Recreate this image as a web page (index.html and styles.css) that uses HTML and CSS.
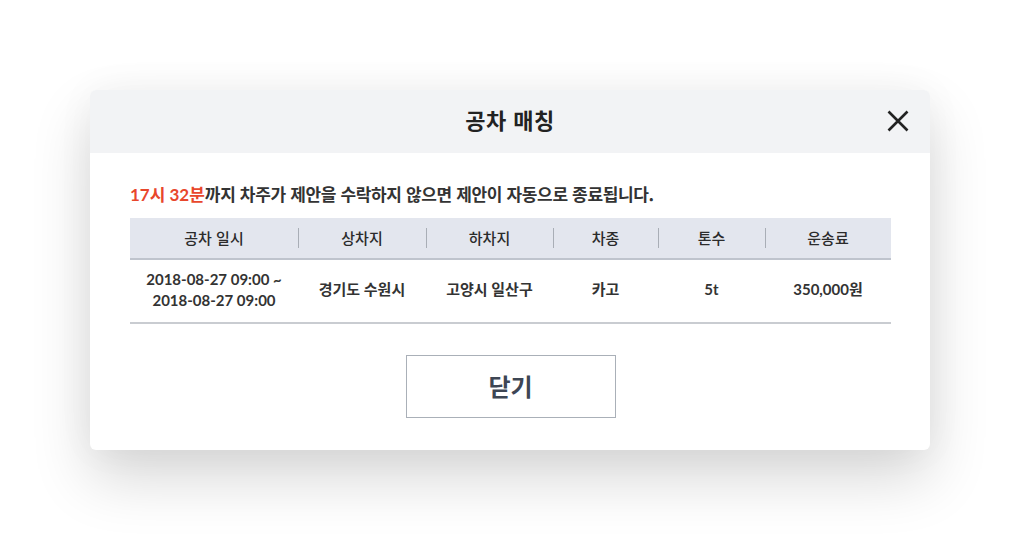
FILE: index.html
```html
<!DOCTYPE html>
<html lang="ko">
<head>
<meta charset="utf-8">
<link rel="stylesheet" href="styles.css">
</head>
<body>
<div class="modal">
  <div class="modal-head">
    <h1 class="modal-title">공차 매칭</h1>
    <button class="close-btn" aria-label="닫기">
      <svg width="22" height="22" viewBox="0 0 22 22"><path d="M1.5 1.5 L20.5 20.5 M20.5 1.5 L1.5 20.5" stroke="#222" stroke-width="2.6" fill="none"/></svg>
    </button>
  </div>
  <div class="modal-body">
    <p class="notice"><span class="accent">17시 32분</span>까지 차주가 제안을 수락하지 않으면 제안이 자동으로 종료됩니다.</p>
    <table class="info">
      <colgroup>
        <col class="c1"><col class="c2"><col class="c3"><col class="c4"><col class="c5"><col class="c6">
      </colgroup>
      <thead>
        <tr>
          <th>공차 일시</th><th>상차지</th><th>하차지</th><th>차종</th><th>톤수</th><th>운송료</th>
        </tr>
      </thead>
      <tbody>
        <tr>
          <td>2018-08-27 09:00 ~<br>2018-08-27 09:00</td>
          <td>경기도 수원시</td>
          <td>고양시 일산구</td>
          <td>카고</td>
          <td>5t</td>
          <td>350,000원</td>
        </tr>
      </tbody>
    </table>
    <div class="actions">
      <button class="btn-close">닫기</button>
    </div>
  </div>
</div>
</body>
</html>
```

FILE: styles.css
```css
* { box-sizing: border-box; }
html, body { margin: 0; padding: 0; background: #fff; }
html { height: 100%; }
body {
  font-family: "Lato", "Noto Sans CJK KR", sans-serif;
  color: #333;
  padding-top: 90px;
  min-height: 540px;
  height: 100%;
}
.modal {
  width: 840px;
  margin: 0 auto;
  background: #fff;
  border-radius: 6px;
  box-shadow: 0 28px 60px rgba(0,0,0,0.16), 0 0 40px rgba(0,0,0,0.04);
  overflow: hidden;
}
.modal-head {
  position: relative;
  height: 63px;
  background: #f2f3f5;
  display: flex;
  align-items: center;
  justify-content: center;
  padding-bottom: 6px;
}
.modal-title {
  margin: 0;
  font-size: 22px;
  line-height: 30px;
  font-weight: 700;
  color: #222;
  font-family: "Noto Sans CJK KR", sans-serif;
  letter-spacing: 0.5px;
}
.close-btn {
  position: absolute;
  right: 21px;
  top: 20px;
  width: 22px;
  height: 22px;
  padding: 0;
  border: 0;
  background: none;
  display: block;
}
.close-btn svg { display: block; }
.modal-body {
  padding: 28px 39px 32px 40px;
}
.notice {
  margin: 0 0 10px;
  font-size: 17px;
  line-height: 26px;
  font-weight: 700;
  color: #333;
  letter-spacing: -0.35px;
  font-family: "Noto Sans CJK KR", sans-serif;
}
.accent { color: #e8472c; font-family: "Lato", "Noto Sans CJK KR", sans-serif; font-weight: 700; letter-spacing: 0; }
.info {
  width: 761px;
  border-collapse: collapse;
  table-layout: fixed;
}
.c1 { width: 168px; } .c2 { width: 128px; } .c3 { width: 127px; }
.c4 { width: 105px; } .c5 { width: 107px; } .c6 { width: 126px; }
.info th {
  position: relative;
  height: 41px;
  background: #e3e6ee;
  font-size: 15px;
  font-weight: 500;
  color: #2b2b2b;
  font-family: "Noto Sans CJK KR", sans-serif;
  border-bottom: 2px solid #bfc4cd;
  padding: 0 0 2px;
}
.info th + th::before {
  content: "";
  position: absolute;
  left: 0;
  top: 10px;
  width: 1px;
  height: 20px;
  background: #a9aeb6;
}
.info td {
  height: 64px;
  text-align: center;
  font-size: 15px;
  font-weight: 700;
  line-height: 21px;
  color: #333;
  border-bottom: 2px solid #c9ccd1;
  padding: 0 0 3px;
}
.actions {
  display: flex;
  justify-content: center;
  margin-top: 31px;
}
.btn-close {
  width: 210px;
  height: 63px;
  background: #fff;
  border: 1px solid #aab0b8;
  font-family: "Noto Sans CJK KR", sans-serif;
  font-size: 24px;
  font-weight: 700;
  color: #3d4654;
  padding: 0 0 3px;
}
```
